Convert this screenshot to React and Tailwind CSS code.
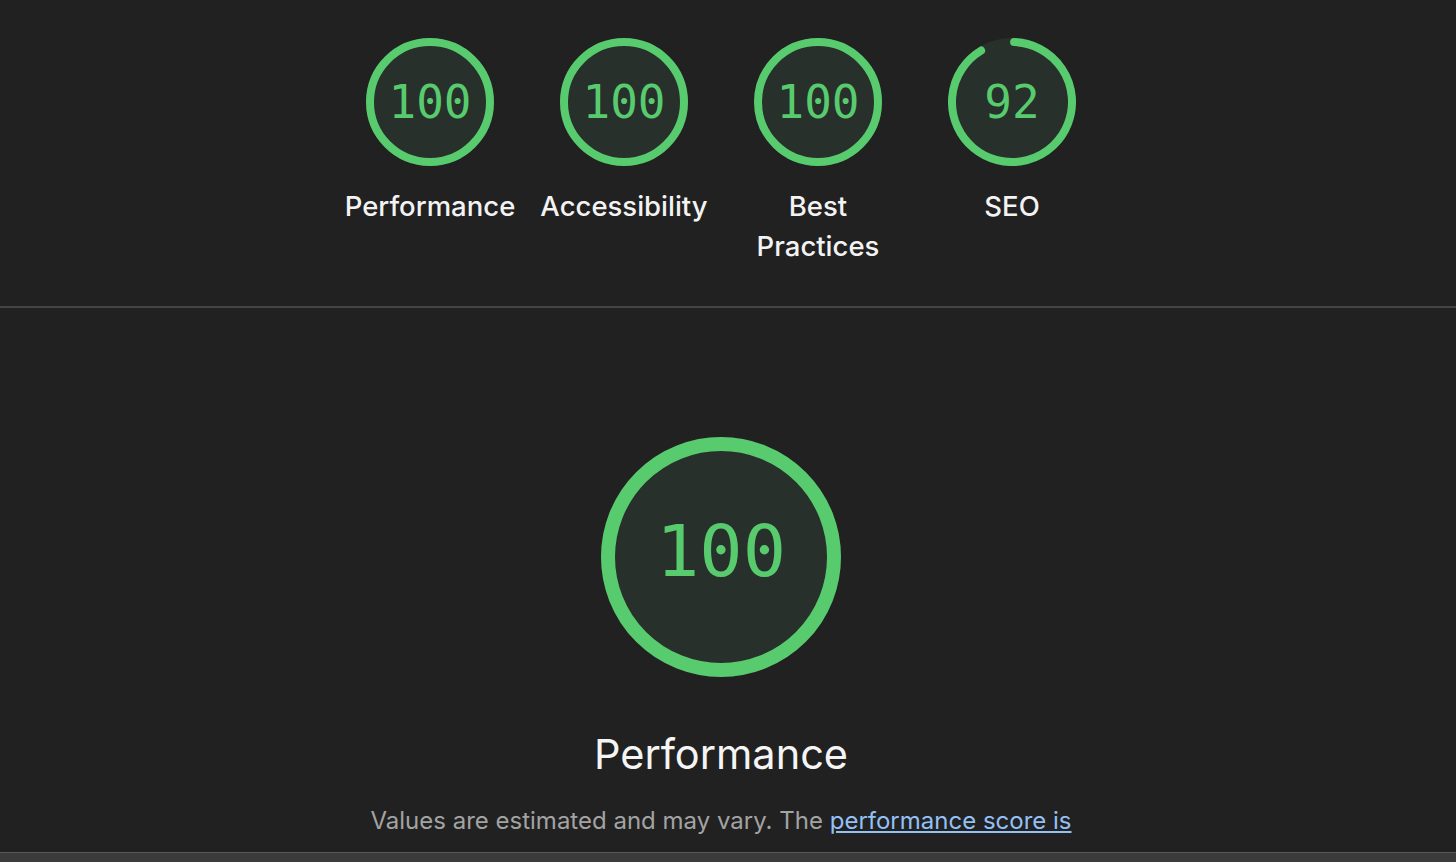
import React from 'react';

const GREEN = '#58cb6e';
const FILL = '#27302a';

const polar = (cx, cy, r, deg) => {
  const a = ((deg - 90) * Math.PI) / 180;
  return [cx + r * Math.cos(a), cy + r * Math.sin(a)];
};

const Gauge = ({ score, size, stroke, fontSize, lift = 0 }) => {
  const c = size / 2;
  const r = c - stroke / 2;
  let arc;
  if (score >= 100) {
    arc = <circle cx={c} cy={c} r={r} fill="none" stroke={GREEN} strokeWidth={stroke} />;
  } else {
    const start = 2;
    const end = 329;
    const [x1, y1] = polar(c, c, r, start);
    const [x2, y2] = polar(c, c, r, end);
    arc = (
      <path
        d={`M ${x1} ${y1} A ${r} ${r} 0 1 1 ${x2} ${y2}`}
        fill="none"
        stroke={GREEN}
        strokeWidth={stroke}
        strokeLinecap="round"
      />
    );
  }
  return (
    <div className="relative flex items-center justify-center" style={{ width: size, height: size }}>
      <svg className="absolute inset-0" width={size} height={size} viewBox={`0 0 ${size} ${size}`}>
        <circle cx={c} cy={c} r={c} fill={FILL} />
        {arc}
      </svg>
      <span
        className="relative font-['DejaVu_Sans_Mono',monospace] text-[#58cb6e] leading-none"
        style={{ fontSize, marginTop: -lift }}
      >
        {score}
      </span>
    </div>
  );
};

const categories = [
  { score: 100, label: ['Performance'] },
  { score: 100, label: ['Accessibility'] },
  { score: 100, label: ['Best', 'Practices'] },
  { score: 92, label: ['SEO'] },
];

export default function App() {
  return (
    <div className="h-[862px] overflow-hidden bg-[#212121] flex flex-col font-['Inter','Noto_Sans',sans-serif]">
      <div className="h-[306px] pt-[38px] pr-[14px] flex justify-center">
        {categories.map((c) => (
          <div key={c.label.join(' ')} className="w-[194px] flex flex-col items-center">
            <Gauge score={c.score} size={128} stroke={8} fontSize={46} />
            <div className="mt-[20px] text-center text-[27.5px] leading-[40px] font-medium text-[#f3f3f3] whitespace-nowrap">
              {c.label.map((l) => (
                <div key={l}>{l}</div>
              ))}
            </div>
          </div>
        ))}
      </div>
      <div className="h-[2px] bg-[#444444]" />
      <div className="flex-1 pr-[14px] flex flex-col items-center pt-[129px]">
        <Gauge score={100} size={240} stroke={14} fontSize={72} lift={12} />
        <div className="mt-[51px] text-[41.5px] leading-[52px] text-[#f5f5f5]">Performance</div>
        <div className="mt-[26px] text-[24px] leading-[30px] text-[#a3a3a3] whitespace-nowrap">
          Values are estimated and may vary. The{' '}
          <a href="#" className="text-[#93c0f5] underline underline-offset-2">performance score is</a>
        </div>
      </div>
      <div className="h-[10px] border-t border-[#585858] bg-[#3b3b3b]" />
    </div>
  );
}
